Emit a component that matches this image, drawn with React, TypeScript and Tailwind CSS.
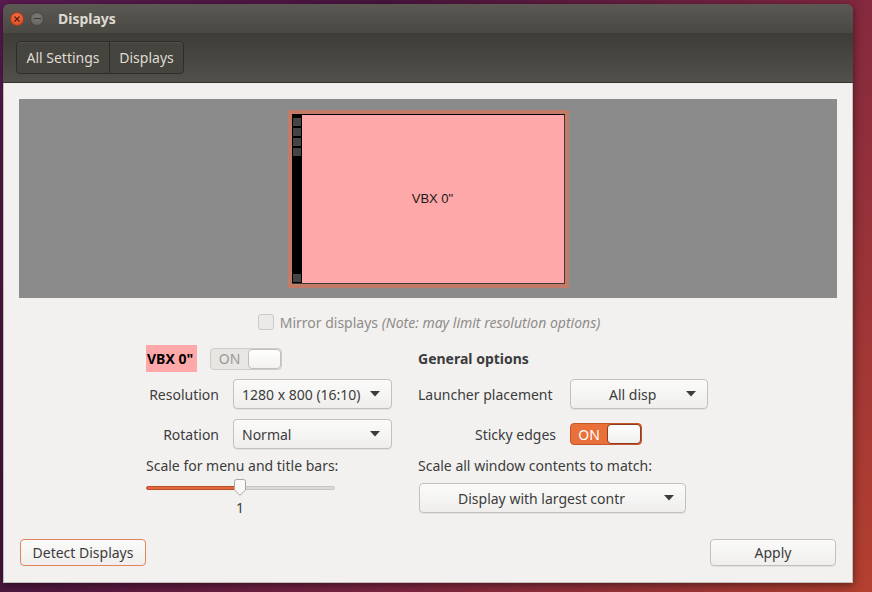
import React from 'react';

const FONT = { fontFamily: '"Noto Sans", "Open Sans", sans-serif' };

function Caret() {
  return (
    <svg width="10" height="6" viewBox="0 0 10 6" className="shrink-0">
      <path d="M0 0 L10 0 L5 5.5 Z" fill="#3c3c3c" />
    </svg>
  );
}

function Dropdown({ text, className, textClass }: { text: string; className: string; textClass: string }) {
  return (
    <div
      className={`flex items-center h-[30px] rounded-[4px] border border-[#c4c0ba] bg-[linear-gradient(to_bottom,#fbfbfa,#efeeec)] shadow-[0_1px_0_rgba(0,0,0,0.06)] ${className}`}
    >
      <div className={`whitespace-nowrap text-[14px] text-[#3c3c3c] ${textClass}`}>{text}</div>
      <div className="ml-auto pr-[11px] flex items-center">
        <Caret />
      </div>
    </div>
  );
}

function Toggle({ on }: { on: boolean }) {
  return on ? (
    <div className="flex w-[72px] h-[22px] rounded-[4px] bg-[#e9703a] border border-[#c4562a] overflow-hidden">
      <div className="w-[36px] flex items-center justify-center text-[14px] text-white">ON</div>
      <div className="flex-1 rounded-[4px] border border-[#8f3a22] bg-[linear-gradient(to_bottom,#ffffff,#f0efed)]" />
    </div>
  ) : (
    <div className="flex w-[72px] h-[22px] rounded-[4px] bg-[#e8e6e3] border border-[#cfccc7] overflow-hidden">
      <div className="w-[37px] flex items-center justify-center text-[14px] text-[#9a9895]">ON</div>
      <div className="flex-1 rounded-[4px] border border-[#c2bfba] bg-[linear-gradient(to_bottom,#ffffff,#f2f1ef)]" />
    </div>
  );
}

function Slider() {
  return (
    <div className="relative w-[189px] h-[17px] flex items-center">
      <div className="w-[94px] h-[4px] rounded-l-full bg-[#e0683a] border border-[#b9502a]" />
      <div className="flex-1 h-[4px] rounded-r-full bg-[#dcdad7] border border-[#c6c3bf]" />
      <svg className="absolute left-[87px] top-0" width="14" height="17" viewBox="0 0 14 17">
        <path
          d="M1.5 2.5 Q1.5 0.5 3.5 0.5 L10.5 0.5 Q12.5 0.5 12.5 2.5 L12.5 11 L7 16.3 L1.5 11 Z"
          fill="#faf9f8"
          stroke="#a9a6a1"
        />
      </svg>
    </div>
  );
}

export default function App() {
  return (
    <div
      style={FONT}
      className="w-[872px] h-[592px] pt-[4px] pl-[3px] bg-[linear-gradient(125deg,#5c1b52_0%,#4a1540_30%,#7a2442_60%,#b4402f_100%)] overflow-hidden"
    >
      <div className="w-[850px] h-[579px] flex flex-col rounded-t-[6px] overflow-hidden shadow-[0_2px_10px_rgba(0,0,0,0.5)]">
        {/* Title bar */}
        <div className="h-[29px] flex items-center bg-[linear-gradient(to_bottom,#5c5954,#4a4843)] pl-[7px]">
          <div className="w-[14px] h-[14px] rounded-full bg-[radial-gradient(circle_at_50%_35%,#f4734a,#d9471f)] border border-[#a93a1c] flex items-center justify-center">
            <svg width="6" height="6" viewBox="0 0 6 6">
              <path d="M0.5 0.5 L5.5 5.5 M5.5 0.5 L0.5 5.5" stroke="#5a1a08" strokeWidth="1.2" />
            </svg>
          </div>
          <div className="ml-[6px] w-[14px] h-[14px] rounded-full bg-[radial-gradient(circle_at_50%_35%,#7c7974,#65625d)] border border-[#4a4743] flex items-center justify-center">
            <div className="w-[7px] h-[1.5px] bg-[#3a3834]" />
          </div>
          <div className="ml-[14px] text-[14px] font-bold text-[#dfdbd2]">Displays</div>
        </div>

        {/* Toolbar */}
        <div className="h-[50px] flex items-start pt-[8px] pl-[13px] bg-[linear-gradient(to_bottom,#3e3c37,#52504a)] border-b border-[#34322e]">
          <div className="flex h-[33px] rounded-[4px] border border-[#2f2d29] shadow-[inset_0_1px_0_rgba(255,255,255,0.06)] bg-[#46443f] text-[14px] text-[#dfdbd2]">
            <div className="w-[93px] flex items-center justify-center border-r border-[#2f2d29]">All Settings</div>
            <div className="w-[73px] flex items-center justify-center">Displays</div>
          </div>
        </div>

        {/* Content */}
        <div className="flex-1 flex flex-col bg-[#f2f1f0] border-x border-b border-[#c3c0bb]">
          {/* Display arrangement */}
          <div className="mt-[16px] ml-[15px] w-[818px] h-[199px] bg-[#8b8b8b] flex items-center justify-center">
            <div className="w-[281px] h-[178px] bg-[#c27b66] p-[4px]">
              <div className="flex w-full h-full border-b border-r border-[#3a3a3a] border-t border-t-black">
                <div className="w-[10px] bg-black flex flex-col items-center pt-[3px] gap-[2px]">
                  <div className="w-[8px] h-[8px] bg-[#444]" />
                  <div className="w-[8px] h-[8px] bg-[#444]" />
                  <div className="w-[8px] h-[8px] bg-[#444]" />
                  <div className="w-[8px] h-[8px] bg-[#444]" />
                  <div className="mt-auto mb-[1px] w-[8px] h-[8px] bg-[#444]" />
                </div>
                <div
                  className="flex-1 bg-[#ffa8a9] flex items-center justify-center text-[13px] text-[#1a1a1a]"
                  style={{ fontFamily: '"Liberation Sans", Arial, sans-serif' }}
                >
                  VBX 0"
                </div>
              </div>
            </div>
          </div>

          {/* Mirror */}
          <div className="mt-[15px] flex items-center justify-center h-[18px] text-[14px] text-[#8f8c88] pl-[2px]">
            <div className="w-[16px] h-[16px] rounded-[3px] border border-[#cdcac5] bg-[#eceae8] mr-[6px]" />
            <span>Mirror displays&nbsp;</span>
            <span className="italic">(Note: may limit resolution options)</span>
          </div>

          {/* Options */}
          <div className="mt-[14px] flex pl-[142px] text-[14px] text-[#3c3c3c]">
            {/* Left column */}
            <div className="w-[272px] flex flex-col">
              <div className="h-[27px] flex items-center">
                <div className="h-[27px] w-[51px] bg-[#ffa8a9] flex items-center pl-[1px] font-bold text-black">VBX 0"</div>
                <div className="ml-[13px]">
                  <Toggle on={false} />
                </div>
              </div>
              <div className="mt-[7px] flex items-center">
                <div className="w-[73px] text-right">Resolution</div>
                <Dropdown text="1280 x 800 (16:10)" className="ml-[14px] w-[159px]" textClass="pl-[8px]" />
              </div>
              <div className="mt-[10px] flex items-center">
                <div className="w-[73px] text-right">Rotation</div>
                <Dropdown text="Normal" className="ml-[14px] w-[159px]" textClass="pl-[8px]" />
              </div>
              <div className="mt-[8px] h-[17px] flex items-center">Scale for menu and title bars:</div>
              <div className="mt-[5px]">
                <Slider />
              </div>
              <div className="mt-[3px] h-[16px] w-[189px] flex items-center pl-[90px] text-[#3c3c3c]">1</div>
            </div>

            {/* Right column */}
            <div className="flex flex-col">
              <div className="h-[27px] flex items-center font-bold">General options</div>
              <div className="mt-[7px] flex items-center">
                <div className="w-[138px]">Launcher placement</div>
                <Dropdown text="All disp" className="ml-[14px] w-[138px]" textClass="ml-[38px]" />
              </div>
              <div className="mt-[10px] h-[30px] flex items-center">
                <div className="w-[138px] text-right">Sticky edges</div>
                <div className="ml-[14px]">
                  <Toggle on={true} />
                </div>
              </div>
              <div className="mt-[8px] h-[17px] flex items-center">Scale all window contents to match:</div>
              <Dropdown
                text="Display with largest contr"
                className="mt-[9px] ml-[1px] w-[267px]"
                textClass="ml-[38px]"
              />
            </div>
          </div>

          {/* Buttons */}
          <div className="mt-auto mb-[16px] flex items-center justify-between px-[16px] text-[14px] text-[#3c3c3c]">
            <div className="w-[126px] h-[27px] flex items-center justify-center rounded-[4px] border border-[#e2845c] bg-[linear-gradient(to_bottom,#fbfbfa,#efeeec)]">
              Detect Displays
            </div>
            <div className="w-[126px] h-[27px] flex items-center justify-center rounded-[4px] border border-[#c4c0ba] bg-[linear-gradient(to_bottom,#fbfbfa,#efeeec)] shadow-[0_1px_0_rgba(0,0,0,0.06)]">
              Apply
            </div>
          </div>
        </div>
      </div>
    </div>
  );
}
